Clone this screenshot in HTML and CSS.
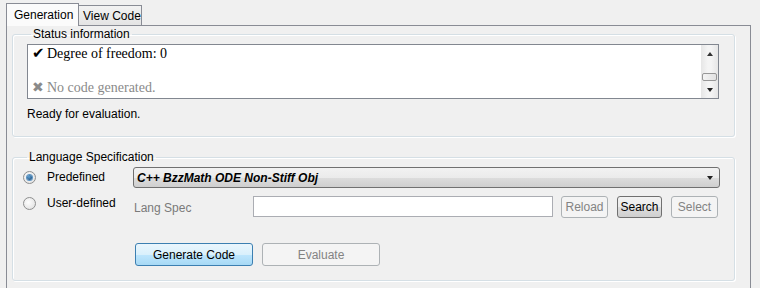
FILE: index.html
```html
<!DOCTYPE html>
<html>
<head>
<meta charset="utf-8">
<link rel="stylesheet" href="styles.css">
</head>
<body>
<div class="tabs">
  <div class="tab tab-active">Generation</div>
  <div class="tab tab-inactive">View Code</div>
</div>
<div class="panel">
  <fieldset class="group group-status">
    <legend class="group-title">Status information</legend>
    <div class="status-box">
      <div class="status-text">
        <div class="status-line"><span class="status-icon ok">✔</span>Degree of freedom: 0</div>
        <div class="status-line"></div>
        <div class="status-line muted"><span class="status-icon err">✖</span>No code generated.</div>
      </div>
      <div class="vscroll">
        <div class="sb-btn"><span class="arrow-up"></span></div>
        <div class="sb-track"><div class="sb-thumb"></div></div>
        <div class="sb-btn"><span class="arrow-down"></span></div>
      </div>
    </div>
    <div class="ready">Ready for evaluation.</div>
  </fieldset>

  <fieldset class="group group-lang">
    <legend class="group-title">Language Specification</legend>
    <div class="row row-one">
      <label class="radio-label"><span class="radio radio-on"></span>Predefined</label>
      <div class="combo"><span class="combo-text">C++ BzzMath ODE Non-Stiff Obj</span><span class="arrow-down combo-arrow"></span></div>
    </div>
    <div class="row row-two">
      <label class="radio-label radio-top"><span class="radio"></span>User-defined</label>
      <span class="field-label">Lang Spec</span>
      <div class="textinput"></div>
      <div class="btn btn-disabled btn-reload">Reload</div>
      <div class="btn btn-normal btn-search">Search</div>
      <div class="btn btn-disabled btn-select">Select</div>
    </div>
    <div class="row row-three">
      <div class="btn btn-default btn-wide">Generate Code</div>
      <div class="btn btn-disabled btn-wide">Evaluate</div>
    </div>
  </fieldset>
</div>
</body>
</html>
```
FILE: styles.css
```css
* { box-sizing: border-box; }
html, body {
  margin: 0;
  padding: 0;
  background: #f0f0f0;
  font-family: "Liberation Sans", Arial, sans-serif;
  font-size: 12px;
  color: #000;
  overflow: hidden;
}
.tabs {
  display: flex;
  align-items: flex-end;
  padding: 3px 0 0 6px;
  height: 25px;
}
.tab {
  line-height: 15px;
  border: 1px solid #898c95;
  border-bottom: none;
}
.tab-active {
  width: 73px;
  height: 23px;
  margin-bottom: -1px;
  padding: 4px 0 0 7px;
  background: #fbfbfb;
  position: relative;
  z-index: 1;
}
.tab-inactive {
  width: 63px;
  height: 20px;
  border-left: none;
  padding: 3px 0 0 4px;
  background: linear-gradient(#f2f2f2, #e4e4e4);
}
.panel {
  margin-left: 6px;
  width: 745px;
  height: 263px;
  border: 1px solid #898c95;
  border-bottom: none;
  padding: 1px 15px 0 5px;
}
.group {
  margin: 0;
  min-width: 0;
  border: 1px solid #d5dfe5;
  border-radius: 3px;
  box-shadow: inset 1px 1px 0 #fff, 1px 1px 0 #fff;
}
.group-title {
  padding: 0 2px;
  margin-left: 4px;
  line-height: 14px;
  font-size: 12px;
}
.group-status {
  padding: 3px 15px 14px 14px;
}
.group-lang {
  margin-top: 13px;
  padding: 3px 14px 14px 10px;
}
.status-box {
  display: flex;
  height: 55px;
  border: 1px solid #828790;
  background: #fff;
}
.status-text {
  flex: 1;
  padding-left: 4px;
  font-family: "Liberation Serif", "Times New Roman", serif;
  font-size: 14px;
}
.status-line {
  height: 17px;
  line-height: 17px;
  white-space: nowrap;
}
.status-icon {
  display: inline-block;
  width: 15px;
  font-family: "DejaVu Sans", sans-serif;
  font-size: 15px;
}
.ok { color: #000; }
.muted { color: #8a8a8a; }
.err { color: #8a8a8a; font-size: 14px; }
.vscroll {
  width: 17px;
  display: flex;
  flex-direction: column;
  background: linear-gradient(90deg, #e6e6e6, #f4f4f4 40%, #f4f4f4 60%, #e6e6e6);
}
.sb-btn {
  height: 17px;
  display: flex;
  align-items: center;
  justify-content: center;
}
.sb-track {
  flex: 1;
  display: flex;
  flex-direction: column;
  padding: 0 1px;
}
.sb-thumb {
  margin-top: auto;
  height: 8px;
  border: 1px solid #979797;
  border-radius: 2px;
  background: linear-gradient(90deg, #f3f3f3, #e2e2e2);
}
.arrow-up, .arrow-down {
  width: 0;
  height: 0;
  border-left: 3.5px solid transparent;
  border-right: 3.5px solid transparent;
}
.arrow-up { border-bottom: 4px solid #333; }
.arrow-down { border-top: 4px solid #222; }
.ready {
  margin-top: 8px;
  line-height: 15px;
}
.row {
  display: flex;
  align-items: center;
}
.row-one { height: 21px; }
.row-two { height: 22px; margin-top: 8px; }
.row-three { height: 23px; margin-top: 25px; padding-left: 112px; gap: 9px; }
.radio-label {
  width: 110px;
  flex: none;
  display: flex;
  align-items: center;
  height: 13px;
  line-height: 13px;
}
.radio-top {
  align-self: flex-start;
  margin-top: 1px;
}
.radio {
  width: 13px;
  height: 13px;
  margin-right: 11px;
  border-radius: 50%;
  border: 1px solid #8e8f8f;
  background: radial-gradient(circle at 40% 40%, #fefefe, #dcdcdc);
  display: flex;
  align-items: center;
  justify-content: center;
}
.radio-on::after {
  content: "";
  width: 5px;
  height: 5px;
  border-radius: 50%;
  background: radial-gradient(circle at 40% 35%, #5fa3d6, #123f6e);
  box-shadow: 0 0 0 1px #5d95c4;
}
.combo {
  width: 587px;
  height: 21px;
  border: 1px solid #707070;
  border-radius: 3px;
  background: linear-gradient(#f2f2f2 0%, #ebebeb 50%, #dddddd 51%, #cfcfcf 100%);
  display: flex;
  align-items: center;
  padding: 0 6px 0 3px;
}
.combo-text {
  flex: 1;
  font-weight: bold;
  font-style: italic;
}
.field-label {
  width: 120px;
  padding-left: 1px;
  color: #7a7a7a;
  margin-top: 1px;
}
.textinput {
  width: 300px;
  height: 21px;
  border: 1px solid #abadb3;
  background: #fff;
  align-self: flex-start;
}
.btn {
  height: 22px;
  border-radius: 3px;
  display: flex;
  align-items: center;
  justify-content: center;
}
.btn-disabled {
  border: 1px solid #adb2b5;
  background: #f4f4f4;
  color: #838383;
}
.btn-normal {
  border: 1px solid #707070;
  background: linear-gradient(#f2f2f2 0%, #ebebeb 50%, #dddddd 51%, #cfcfcf 100%);
}
.btn-default {
  border: 1px solid #3c7fb1;
  background: linear-gradient(#eaf6fd 0%, #d9f0fc 50%, #bee6fd 51%, #a7d9f5 100%);
}
.btn-reload { width: 47px; margin-left: 8px; }
.btn-search { width: 45px; margin-left: 9px; }
.btn-select { width: 47px; margin-left: 9px; }
.btn-wide { width: 118px; height: 23px; }
```
